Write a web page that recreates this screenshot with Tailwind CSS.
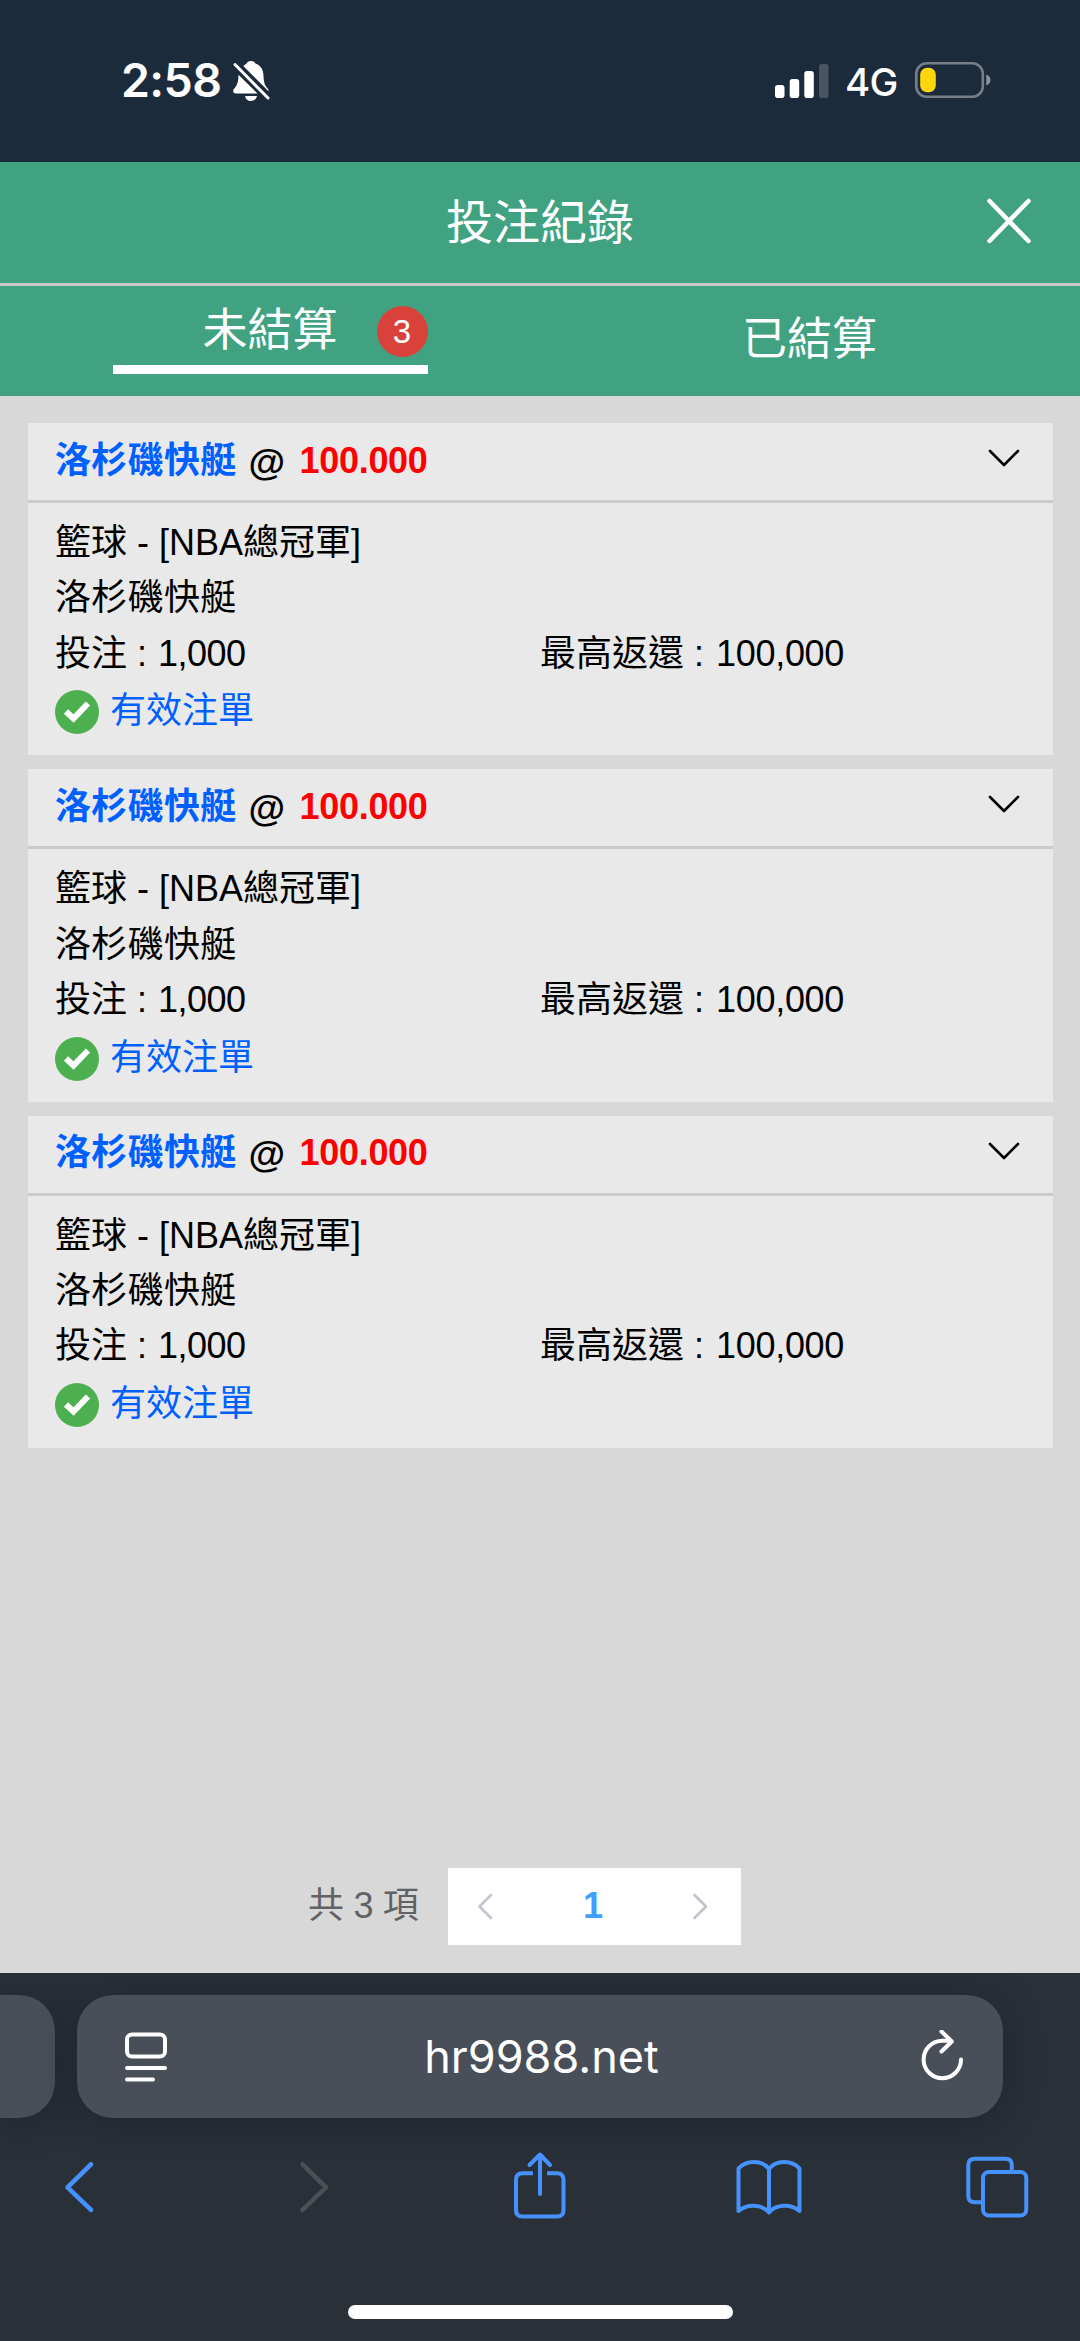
<!DOCTYPE html>
<html lang="zh-Hant">
<head>
<meta charset="utf-8">
<title>投注紀錄</title>
<script src="https://cdn.jsdelivr.net/npm/@tailwindcss/browser@4"></script>
</head>
<body class="flex h-[2341px] w-[1080px] flex-col overflow-hidden bg-[#d8d8d8] font-['Liberation_Sans','Noto_Sans_CJK_TC',sans-serif] text-[36px] text-black">

<!-- status bar -->
<div class="flex h-[162px] shrink-0 items-start justify-between bg-[#1b2b3b] pr-[88px] pl-[121px] pt-[52px] font-['Inter','Liberation_Sans',sans-serif] text-white">
  <div class="flex items-center">
    <span class="w-[101px] whitespace-nowrap text-[46.5px] leading-[57px] font-semibold tracking-[-0.6px]">2:58</span>
    <svg class="ml-[9px] h-[42px] w-[40px]" viewBox="0 0 40 42" fill="none">
      <path fill="#fff" d="M12.5 6.2C14 4.3 15 3.9 15.6 3.5 16.7 1.7 18 1 20 1s3.600.8 4.500 2.500C30 5.500 32.300 10 32.500 15.500 32.700 22.500 33.800 25.300 36.500 28.300 37.500 29.500 37.800 30.600 37.500 31.300Z M7.500 14.800 26.500 33.500H5.200C3 33.500 2.200 32.400 2.200 31 2.200 29.500 3 28.700 4.500 27 6.600 24.500 7.500 20.500 7.500 14.800Z M14 36H26C25.500 39 23 41 20 41S14.500 39 14 36Z"/>
      <path stroke="#fff" stroke-width="3" stroke-linecap="round" d="M4 4.500 37 38"/>
    </svg>
  </div>
  <div class="flex h-[57px] items-center">
    <svg class="h-[36px] w-[54px]" viewBox="0 0 54 36" fill="#fff">
      <rect x="0" y="22" width="9.500" height="13" rx="2.800"/>
      <rect x="14.700" y="16" width="9.500" height="19" rx="2.800"/>
      <rect x="29.300" y="8" width="9.500" height="27" rx="2.800"/>
      <rect x="44" y="1" width="9.500" height="34" rx="2.800" opacity=".2"/>
    </svg>
    <span class="ml-[16px] mt-[3px] w-[54px] whitespace-nowrap text-[38.500px] leading-[57px] font-medium tracking-[-0.8px]">4G</span>
    <svg class="mt-[-1px] ml-[16px] h-[36px] w-[77px]" viewBox="0 0 77 36" fill="none">
      <rect x="1.300" y="1.300" width="66.500" height="33.500" rx="10.500" stroke="#fff" stroke-opacity=".4" stroke-width="2.600"/>
      <rect x="5.200" y="5.700" width="15.600" height="24.500" rx="7" fill="#ffd60a"/>
      <path d="M71.300 12.500C74 13.500 75.500 15.500 75.500 18S74 22.500 71.300 23.500Z" fill="#fff" fill-opacity=".5"/>
    </svg>
  </div>
</div>

<!-- page header -->
<header class="grid h-[124px] shrink-0 grid-cols-[1fr_auto_1fr] items-center border-b-[3px] border-[#c8c8c8] bg-[#40a280] text-white">
  <h1 class="col-start-2 text-[47px] leading-[60px]">投注紀錄</h1>
  <svg class="mt-[-4px] mr-[48px] h-[46px] w-[46px] justify-self-end" viewBox="0 0 46 46" fill="none" stroke="#fff" stroke-width="4.500" stroke-linecap="round"><path d="M3.500 3 42.500 43M42.500 3 3.500 43"/></svg>
</header>

<!-- tabs -->
<nav class="grid h-[110px] shrink-0 grid-cols-2 bg-[#40a280] text-[45px] text-white">
  <div class="flex justify-center">
    <div class="flex h-[88px] w-[315px] items-center justify-end border-b-[9px] border-white pt-[11px]">
      <span class="leading-[54px]">未結算</span>
      <span class="ml-[39px] flex size-[51px] items-center justify-center rounded-full bg-[#d9423b] text-[33px] leading-none">3</span>
    </div>
  </div>
  <div class="flex h-[108px] items-center justify-center pr-[1px]"><span>已結算</span></div>
</nav>

<!-- bet list -->
<main id="bets" class="flex flex-1 flex-col gap-[14px] px-[27.500px] pt-[27px]"></main>

<template id="bet">
  <article class="h-[332.400px] bg-[#e9e9e9]">
    <div class="flex h-[80px] items-center justify-between border-b-[3px] border-[#cbcbcb] pr-[30px] pl-[27.500px] font-bold">
      <div class="mt-[-2px] flex items-center leading-[54px]"><span class="tracking-[0.300px] text-[#005fff]">洛杉磯快艇</span><span class="mt-[2px] ml-[12px] w-[38px] text-[37.500px]">@</span><span class="ml-[13px] tracking-[-0.300px] text-[#f00]">100.000</span></div>
      <svg class="mt-[-7px] h-[20px] w-[36px]" viewBox="0 0 36 20" fill="none" stroke="#000" stroke-width="2.600" stroke-linecap="round" stroke-linejoin="round"><path d="M3 3 17 17 31 3"/></svg>
    </div>
    <div class="px-[27.500px] pt-[12px] leading-[55.300px]">
      <div>籃球 - [NBA總冠軍]</div>
      <div class="tracking-[0.300px]">洛杉磯快艇</div>
      <div class="grid grid-cols-[485px_1fr]"><span>投注 : <span class="ml-[1px] tracking-[-0.500px]">1,000</span></span><span>最高返還 : <span class="ml-[2px] tracking-[-0.300px]">100,000</span></span></div>
      <div class="flex h-[60px] items-center text-[#005fff]">
        <svg class="mt-[3px] mr-[11px] size-[44px]" viewBox="0 0 44 44"><circle cx="22" cy="22" r="22" fill="#4caf50"/><path fill="none" stroke="#fff" stroke-width="6" d="M11 21.500 18.500 28.500 33 13.500"/></svg>
        <span>有效注單</span>
      </div>
    </div>
  </article>
</template>

<!-- pagination -->
<footer class="flex h-[105px] shrink-0 pl-[308px] text-[#606266]">
  <span class="w-[140px] pt-[1px] leading-[74px] tracking-[-0.300px]">共 3 項</span>
  <div class="flex h-[77px] w-[293px] items-center justify-between bg-white pr-[31px] pl-[29px]">
    <svg class="mt-[-2px] h-[28px] w-[18px]" viewBox="0 0 18 28" fill="none" stroke="#c0c4cc" stroke-width="2.600" stroke-linecap="round" stroke-linejoin="round"><path d="M14 3 2.500 14.500 14 26"/></svg>
    <span class="mt-[-2px] mr-[1px] leading-[74px] font-bold text-[#409eff]">1</span>
    <svg class="mt-[-2px] h-[28px] w-[18px]" viewBox="0 0 18 28" fill="none" stroke="#c0c4cc" stroke-width="2.600" stroke-linecap="round" stroke-linejoin="round"><path d="M2.500 3 14 14.500 2.500 26"/></svg>
  </div>
</footer>

<!-- browser chrome -->
<div class="flex h-[368px] shrink-0 flex-col overflow-hidden bg-[#293038] pt-[22px]">
  <div class="flex h-[123px] shrink-0 gap-[22px]">
    <div class="w-[55px] rounded-r-[36px] bg-[#484f58] shadow-[0_4px_36px_rgba(20,25,34,0.45)]"></div>
    <div class="grid w-[926px] grid-cols-[46px_1fr_46px] items-center rounded-[36px] bg-[#484f58] pr-[38px] pl-[46px] shadow-[0_4px_36px_rgba(20,25,34,0.45)]">
      <svg class="h-[54px] w-[46px]" viewBox="0 0 46 54" fill="none" stroke="#fff" stroke-width="4" stroke-linecap="round"><rect x="4" y="4.500" width="38" height="22" rx="5"/><path d="M4 38H42M4 49.500H30"/></svg>
      <span class="pr-[5px] text-center font-['Inter','Liberation_Sans',sans-serif] text-[45px] leading-[60px] text-white">hr9988.net</span>
      <svg class="h-[54px] w-[46px]" viewBox="0 0 46 54" fill="none" stroke="#fff" stroke-width="4" stroke-linecap="round" stroke-linejoin="round"><path d="M42 29.500A18.700 18.700 0 1 1 23.300 10.800H32M22.500 1.500 32.800 11.500 22.500 21.500"/></svg>
    </div>
  </div>
  <div class="mt-[32px] flex h-[76px] shrink-0 items-center pl-[60px]">
    <svg class="h-[76px] w-[38px]" viewBox="60 2150 38 76" fill="none" stroke="#4592ff" stroke-width="4.600" stroke-linecap="round" stroke-linejoin="round"><path d="M91 2164.300 67.500 2187.300 91 2209.800"/></svg>
    <svg class="ml-[197px] h-[76px] w-[38px]" viewBox="295 2150 38 76" fill="none" stroke="#4b4f56" stroke-width="4.600" stroke-linecap="round" stroke-linejoin="round"><path d="M302.500 2164.300 326 2187.300 302.500 2209.800"/></svg>
    <svg class="ml-[177px] h-[76px] w-[60px]" viewBox="510 2150 60 76" fill="none" stroke="#4592ff" stroke-width="4"><path d="M533 2173.300H522.500Q516 2173.300 516 2179.800V2210Q516 2216.500 522.500 2216.500H557Q563.500 2216.500 563.500 2210V2179.800Q563.500 2173.300 557 2173.300H547"/><path stroke-linecap="round" stroke-linejoin="round" d="M540 2194V2155.500M529.500 2165 540 2154.500 550 2165"/></svg>
    <svg class="ml-[162px] h-[76px] w-[74px]" viewBox="732 2150 74 76" fill="none" stroke="#4592ff" stroke-width="4" stroke-linecap="round" stroke-linejoin="round"><path d="M738.500 2211V2168.500C746 2160 762 2159.500 769 2169 776 2159.500 792 2160 799.500 2168.500V2211C791 2203.500 776 2204 769 2212.500 762 2204 747 2203.500 738.500 2211ZM769 2169V2212"/></svg>
    <svg class="ml-[156px] h-[76px] w-[68px]" viewBox="962 2150 68 76" fill="none" stroke="#4592ff" stroke-width="4"><rect x="983" y="2172" width="43.300" height="43.500" rx="6"/><path d="M981 2202.300H975Q968.300 2202.300 968.300 2196V2165Q968.300 2158.800 975 2158.800H1005.500Q1011.800 2158.800 1011.800 2165V2170.500"/></svg>
  </div>
  <div class="mx-auto mt-[79px] h-[14px] w-[385px] shrink-0 rounded-full bg-white"></div>
</div>

<script>
  // three identical open bets
  const list = document.getElementById('bets');
  for (let i = 0; i < 3; i++) list.append(document.getElementById('bet').content.cloneNode(true));
</script>
</body>
</html>
